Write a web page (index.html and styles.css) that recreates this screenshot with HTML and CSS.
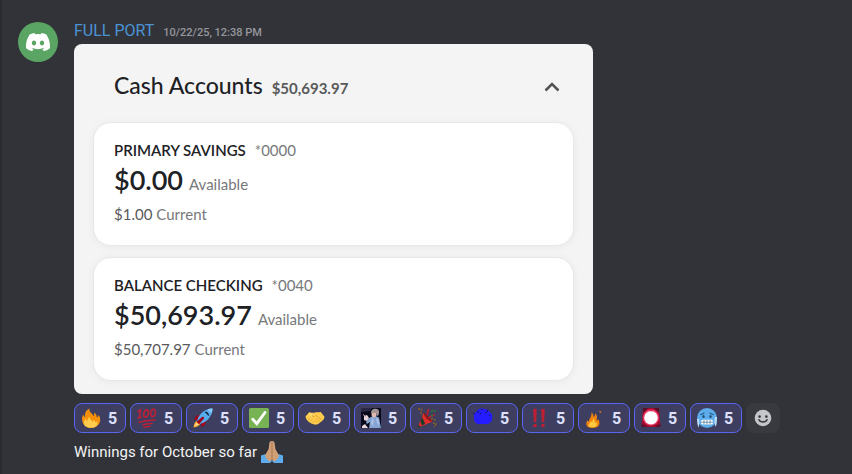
FILE: index.html
```
<!DOCTYPE html>
<html lang="en">
<head>
  <meta charset="UTF-8">
  <title>FULL PORT</title>
  <link rel="stylesheet" href="styles.css">
</head>
<body>
  <article class="message">
    <div class="avatar">
      <svg viewBox="0 0 127.14 96.36" aria-hidden="true"><path fill="#fff" d="M107.7,8.07A105.15,105.15,0,0,0,81.47,0a72.06,72.06,0,0,0-3.36,6.83A97.68,97.68,0,0,0,49,6.83,72.37,72.37,0,0,0,45.64,0,105.89,105.89,0,0,0,19.39,8.09C2.79,32.65-1.71,56.6.54,80.21h0A105.73,105.73,0,0,0,32.71,96.36,77.7,77.7,0,0,0,39.6,85.25a68.42,68.42,0,0,1-10.85-5.18c.91-.66,1.8-1.34,2.66-2a75.57,75.57,0,0,0,64.32,0c.87.71,1.76,1.39,2.66,2a68.68,68.68,0,0,1-10.87,5.19,77,77,0,0,0,6.89,11.1A105.25,105.25,0,0,0,126.6,80.22h0C129.24,52.84,122.09,29.11,107.7,8.07ZM42.45,65.69C36.18,65.69,31,60,31,53s5-12.74,11.43-12.74S54,46,53.89,53,48.84,65.69,42.45,65.69Zm42.24,0C78.41,65.69,73.25,60,73.25,53s5-12.74,11.44-12.74S96.23,46,96.12,53,91.08,65.69,84.69,65.69Z"/></svg>
    </div>

    <div class="content">
      <header class="message-header">
        <span class="author">FULL PORT</span>
        <time class="timestamp" datetime="2025-10-22T12:38">10/22/25, 12:38 PM</time>
      </header>

      <section class="accounts">
        <div class="accounts-header">
          <h2>Cash Accounts</h2>
          <span class="total">$50,693.97</span>
          <button class="collapse" aria-label="Collapse">
            <svg viewBox="0 0 16 10"><path d="M1.500 8.500 8 2l6.500 6.500" fill="none" stroke="#555" stroke-width="2.600"/></svg>
          </button>
        </div>

        <div class="account">
          <div class="account-name"><strong>PRIMARY SAVINGS</strong> <span>*0000</span></div>
          <div class="available"><strong>$0.00</strong> <span>Available</span></div>
          <div class="current"><b>$1.00</b> Current</div>
        </div>

        <div class="account">
          <div class="account-name"><strong>BALANCE CHECKING</strong> <span>*0040</span></div>
          <div class="available"><strong>$50,693.97</strong> <span>Available</span></div>
          <div class="current"><b>$50,707.97</b> Current</div>
        </div>
      </section>

      <div class="reactions">
        <button class="reaction" aria-label="Fire, 5">
          <svg viewBox="0 0 20 20"><path fill="#f4900c" d="M1 11c0-2 .6-3.500 1.500-4.500.2 1.400.8 2.200 1.700 2.500C3.500 5 5 2 8.500.5 8 2.500 9 4 10.500 5.200c1 .9 1.600 1.800 1.900 2.900.9-.8 1.100-2.300.7-3.600 2 1 2.700 2.800 2.700 4.800 1-.3 1.600-1 1.700-2.300 1.200 1.300 1.900 3.100 1.700 5.200C18.800 17 15 19.800 10 19.800S1.200 16.500 1 11z"/><path fill="#ffcc4d" d="M2.800 15c0-2 1-3.500 2-4.300.1 1.200.8 2 1.600 2.200 0-1.500.6-3 2-4 .1 1.600 1 2.200 2 3 .7.600 1 1.200 1.200 2 .8-.5 1-1.300.8-2.200 1.500.7 2 1.700 2.200 2.700.6-.2 1-.6 1.200-1.200 2.400 4-1.300 6.600-5.800 6.600-4.300 0-7.200-1.800-7.200-4.800z"/></svg>
          <span>5</span>
        </button>
        <button class="reaction" aria-label="Hundred, 5">
          <svg viewBox="0 0 20 20" fill="none" stroke="#bb2038" stroke-width="1.700" stroke-linecap="round"><path d="M1 3.500 3.500 2 2.400 9.500M1 9.800l2.900-.4"/><ellipse cx="9" cy="5.600" rx="2.200" ry="3.800" transform="rotate(14 9 5.600)"/><ellipse cx="16" cy="4.900" rx="2.200" ry="3.800" transform="rotate(14 16 4.900)"/><path d="M2 14.200c5-1.300 10-1.900 16-2.200M6 16.800c3-.8 6-1.100 9-1.300M7 19.200c2-.5 4-.8 6-.8" stroke-width="1.500"/></svg>
          <span>5</span>
        </button>
        <button class="reaction" aria-label="Rocket, 5">
          <svg viewBox="0 0 20 20"><path fill="#a0041e" d="M8 6.500 3 8 .8 12l5-.5zM13.500 12 12 17l-4 2.300.5-5z"/><path fill="#ffac33" d="M4.700 12.500C2 13.500.8 16 .5 19.500c3.500-.3 6-1.500 7-4.200z"/><path fill="#ffe8b6" d="M3.500 14.800 1.800 18l3.400-1.500z"/><path fill="#55acee" d="M19.500.5C14.500.5 9 3 5.200 9.500l-1 3.300 3 3 3.300-1C17 11 19.500 5.500 19.500.5z"/><path fill="#a0041e" d="m3.600 13.800 5.800-5c1-.6 2.200.5 1.600 1.600l-5 5.800z"/><path fill="#111b25" d="M12 3.800c2-.5 3.800 1.200 4.200 4.200l-1.500-.7c-.5-1.300-1.100-2-2.500-2.300z"/><path fill="#88c9f9" d="M19.500.5c-2 0-3.500.4-5 1l4 4c.7-1.700 1-3.300 1-5z"/></svg>
          <span>5</span>
        </button>
        <button class="reaction" aria-label="Check mark, 5">
          <svg viewBox="0 0 20 20"><rect width="20" height="20" rx="1.500" fill="#77b255"/><path d="m3.800 11.300 4 4.400L16 4.500" fill="none" stroke="#fff" stroke-width="2.800" stroke-linecap="round"/></svg>
          <span>5</span>
        </button>
        <button class="reaction" aria-label="Handshake, 5">
          <svg viewBox="0 0 20 20"><path fill="#ffcc4d" d="M.5 8.500 4.200 4.200c1.500.8 3.500.2 5 .6 2-.9 4.500-.3 6.500-.8l3.800 4.800c-.4 3.500-3 4.500-5 6.200-1.800 1.300-3.500 2-4.800 1.500C6.500 16 1.200 13.500.5 8.500z"/><path fill="#ffdc72" d="m3.500 5.500 5-.3 2 1.200-4 3z"/><path fill="none" stroke="#d99b2c" stroke-width=".7" stroke-linecap="round" d="M9.500 5 6.800 8.200c1.500 1.100 3-.2 4-.9l5.500 4.200M3 12l2-2M5 13.700l2.200-2.200M7.500 15l2-2M11.500 10.500l3.300 3M10.500 12.500l2.200 2"/></svg>
          <span>5</span>
        </button>
        <button class="reaction" aria-label="Scientist, 5">
          <svg viewBox="0 0 20 20"><path fill="#080a1b" d="M0 0h20v20H0z"/><path fill="#2a2844" d="M0 0h11l-2 3-9 1z"/><path fill="#85a4d2" d="m8 10 5-2.500 5 2 2 10.500H8l1-6-3 2-1-2z"/><path fill="#a9c1e6" d="m11 10 2 2-1 6-2-2zM15 10l3 2v6l-2-3z"/><path fill="#e2b9b1" d="M10.500 4.500h5.200l-.5 4-2.500 1.300-2-1.800z"/><path fill="#a29595" d="M10 5c0-3 2-4.800 4.800-4.200C18 .8 19 4 17.200 7.500L15.800 8l-.5-3z"/><path fill="#e6d6dc" d="m3 8 3-1 2 3-2 3-3-1zM1 18l3-2 3 4H1z"/><path stroke="#d1b1bc" d="M5 9 2 6.500"/></svg>
          <span>5</span>
        </button>
        <button class="reaction" aria-label="Party popper, 5">
          <svg viewBox="0 0 20 20"><path fill="#dd2e2a" d="m6.500 5 9 8.500L.5 20z"/><path fill="#113b26" d="m5 9 3 6.500-3 2-1.500-4zM1.500 17l2 1.500L.8 20z"/><path fill="#8b171b" d="m7 4.500 9 8.500c-1.500.8-4.500-.5-6.500-2.800S6 5.500 7 4.500z"/><path fill="none" stroke="#bd1e2d" stroke-width="1.600" d="M10 7c2-2-1-3 2-6M12 10c1-2.500 3-1 6-4"/><path fill="none" stroke="#8a6423" stroke-width="1.400" stroke-dasharray="2 1" d="M1 1h3c2 2-2 3 1 6M14 11c3-.5 4 1 5 2M16 15l3 1-2 3"/><path fill="none" stroke="#357634" stroke-width="1.500" d="m14 4 2-2M17 3h2M14 8l2-1"/></svg>
          <span>5</span>
        </button>
        <button class="reaction" aria-label="Blue blob, 5">
          <svg viewBox="0 0 20 20"><path fill="#251cff" d="M1 8C.5 6 2 4 3.500 3.500 5 1 8 0 11 1c3-.5 5 1.500 6 3.500 2 1 2.800 3 2.200 5 .3 3-1.700 6-5.200 6.500H5C2 15.500.5 12 1 8z"/><path fill="#10125f" d="M4 3.500h2v1H4zM8 1h1.500v1H8zM14 2h1v2h-1zM7 5h1v1H7zM12 4h1.500v1H12zM16 7h1v1h-1zM0 5h1.500v1H0z"/></svg>
          <span>5</span>
        </button>
        <button class="reaction" aria-label="Double exclamation, 5">
          <svg viewBox="0 0 20 20" fill="#be2033"><path d="M4.200 1.800C4.200.3 7.800.3 7.800 1.800L7.200 14H4.800zM12.200 1.800c0-1.500 3.600-1.500 3.600 0L15.200 14h-2.400z"/><circle cx="6" cy="17.600" r="1.800"/><circle cx="14" cy="17.600" r="1.800"/></svg>
          <span>5</span>
        </button>
        <button class="reaction" aria-label="Flame, 5">
          <svg viewBox="0 0 20 20"><path fill="#f0830c" d="M1.500 17c-.6-2 .5-3 .5-4.500l2 1c-.3-2.500 2-3.500 2-5.500.5-1 .7-2 .2-3.500 2 1 2.500 2.500 2.200 4.500C10 8 10.500 6.500 10 5c2.200 2 2.500 4.500 1.500 7.500l2.500-1c-.5 2 1.300 3.500 0 5.500-1.200 2.200-3 3-6.500 3S2 19 1.500 17z"/><path fill="#ffc83f" d="M3.500 17.500c0-2 2-2.500 2-4.500L7 14.200l1.500-4c1.500 2 1 3 1.500 4.500l1.500-.5c.5 1.500 1 2.500-.5 4-1.500 1.300-7.500 1.800-7.500-.7z"/><path fill="#db7217" d="m13.500 3.500 2.500-.5.500 2.500-1-1z"/></svg>
          <span>5</span>
        </button>
        <button class="reaction" aria-label="Siren, 5">
          <svg viewBox="0 0 20 20"><path fill="#a10b2f" d="M2 0h16l1.500 19H.5z"/><path fill="#56102a" d="M2 0h5L2 5zM13 0h5v5zM1 16l5 3H.5zM19 16l-5 3h5.500z"/><circle cx="10" cy="9.500" r="8.200" fill="#ed3864"/><circle cx="10" cy="9.700" r="6.800" fill="#fff"/><path fill="#d9204e" d="M8.500 1h3L10 4z"/></svg>
          <span>5</span>
        </button>
        <button class="reaction" aria-label="Cold face, 5">
          <svg viewBox="0 0 20 20"><circle cx="10" cy="10" r="10" fill="#5dadec"/><path fill="none" stroke="#27628f" stroke-width="1.200" stroke-linecap="round" d="M3.500 6.500c1.500 0 2.500-.5 3.500-1.500M16.500 6.500c-1.500 0-2.500-.5-3.500-1.500"/><ellipse cx="6.500" cy="8.500" rx="1.200" ry="1.600" fill="#245075"/><ellipse cx="13.500" cy="8.500" rx="1.200" ry="1.600" fill="#245075"/><rect x="4" y="11.800" width="12" height="4.800" rx="1.800" fill="#fff"/><path stroke="#466f8d" stroke-width=".7" d="M4 14.200h12M7 12v4.500M10 12v4.500M13 12v4.500"/><path fill="#bddef4" d="M0 11h2.200v5L1.500 20 .4 16zM17.800 9H20l-.4 7-1 3-1.100-4z"/></svg>
          <span>5</span>
        </button>
        <button class="add-reaction" aria-label="Add reaction">
          <svg viewBox="0 0 20 20"><circle cx="10" cy="10" r="8.300" fill="#c5c6ca"/><circle cx="6.600" cy="8.600" r="1.300" fill="#36373c"/><circle cx="13.400" cy="8.600" r="1.300" fill="#36373c"/><path d="M6 11.800c1.200 3 6.800 3 8 0" fill="none" stroke="#36373c" stroke-width="1.500" stroke-linecap="round"/></svg>
        </button>
      </div>

      <p class="caption">Winnings for October so far
        <svg viewBox="0 0 22 22" role="img" aria-label="Folded hands"><path fill="#5dadec" d="M0 14.500 5 13l6 7-2 2H0zM22 14.500 17 13l-6 7 2 2h9z"/><path fill="#d2a077" d="M10.800 0C9 0 8.200 1.500 8.200 3.500L7.600 8 4 14.500c1 3 2.500 5 5 6l2-2 2 2c2.500-1 4-3 5-6L14.400 8l-.6-4.500C13.800 1.500 13 0 11.200 0z"/><path d="M11 1v17.500" stroke="#9e7254" stroke-width=".9"/></svg>
      </p>
    </div>
  </article>
</body>
</html>
```
FILE: styles.css
```
* {
  box-sizing: border-box;
}

body {
  margin: 0;
  background: #323338;
  font-family: Roboto, "Liberation Sans", sans-serif;
  color: #f2f3f5;
}

button {
  margin: 0;
  border: none;
  font-family: inherit;
  cursor: pointer;
}

svg {
  display: block;
}

.message {
  display: flex;
  gap: 16px;
  min-height: 100vh;
  padding: 22px 16px 8px;
  border-left: 2px solid #2b2c30;
}

.avatar {
  display: flex;
  align-items: center;
  justify-content: center;
  flex: none;
  width: 40px;
  height: 40px;
  border-radius: 50%;
  background: #5aa564;
}

.avatar svg {
  width: 24px;
}

.content {
  flex: 1;
  min-width: 0;
}

.message-header {
  display: flex;
  align-items: baseline;
  gap: 9px;
  height: 22px;
  line-height: 18px;
}

.author {
  font-size: 16px;
  color: #4c93d6;
}

.timestamp {
  font-size: 11px;
  font-weight: 500;
  color: #96979e;
}

.accounts {
  max-width: 519px;
  padding: 20px 19px 13px;
  border-radius: 8px;
  background: #f4f4f4;
  font-family: Lato, "Liberation Sans", sans-serif;
  color: #202124;
}

.accounts-header {
  display: flex;
  align-items: baseline;
  gap: 9px;
  height: 58px;
  padding: 6px 14px 0 21px;
  line-height: 30px;
}

.accounts-header h2 {
  margin: 0;
  font-size: 23px;
  font-weight: 500;
}

.total {
  font-size: 15px;
  font-weight: 700;
  color: #58595b;
}

.collapse {
  margin-left: auto;
  padding: 0 0 2px;
  background: none;
}

.collapse svg {
  width: 16px;
}

.account {
  padding: 17px 20px;
  border: 1px solid #e8e8e8;
  border-radius: 18px;
  background: #fff;
  box-shadow: 0 1px 8px rgba(0, 0, 0, 0.05);
}

.account + .account {
  margin-top: 11px;
}

.account-name,
.available,
.current {
  display: flex;
  align-items: baseline;
  font-size: 15px;
  color: #77787a;
}

.account-name {
  gap: 9px;
  line-height: 20px;
}

.account-name strong {
  font-weight: 600;
  color: #202124;
}

.available {
  gap: 6px;
  height: 40px;
  line-height: 40px;
}

.available strong {
  font-size: 27px;
  font-weight: 600;
  color: #202124;
}

.current {
  gap: 4px;
  line-height: 28px;
}

.current b {
  font-weight: 400;
  color: #58595b;
}

.reactions {
  display: flex;
  flex-wrap: wrap;
  gap: 4px;
  margin-top: 9px;
}

.reaction,
.add-reaction {
  display: flex;
  align-items: center;
  height: 30px;
  border-radius: 8px;
}

.reaction {
  gap: 7px;
  width: 52px;
  padding: 0 6px;
  border: 1px solid #5865f2;
  background: #3d3e60;
  color: #dee0fc;
  font-size: 16px;
  font-weight: 700;
}

.reaction svg,
.add-reaction svg {
  flex: none;
  width: 20px;
  height: 20px;
}

.add-reaction {
  padding: 0 7px;
  background: #393a3f;
}

.caption {
  display: flex;
  align-items: center;
  gap: 4px;
  margin: 8px 0 0;
  font-size: 15px;
  line-height: 22px;
}

.caption svg {
  width: 22px;
  height: 22px;
}
```
